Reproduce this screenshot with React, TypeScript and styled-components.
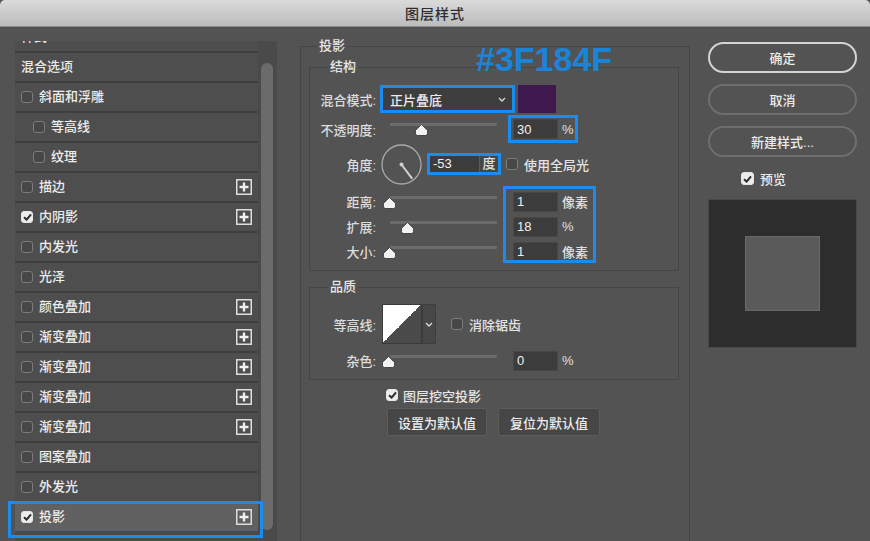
import React from 'react';
import styled, { createGlobalStyle, css } from 'styled-components';

const BLUE = '#1a8cf0';

const GlobalStyle = createGlobalStyle`
  html, body { margin: 0; padding: 0; background: #535353; }
  body {
    font-family: "Liberation Sans", "Noto Sans CJK SC", sans-serif;
    font-size: 13px;
    font-weight: 500;
    color: #e4e4e4;
  }
  * { box-sizing: border-box; }
`;

// blue annotation frame drawn over an element
const mark = css<{ $mark?: string }>`
  ${p =>
    p.$mark &&
    css`
      position: relative;
      &::after {
        content: '';
        position: absolute;
        inset: ${p.$mark};
        border: 3px solid ${BLUE};
        pointer-events: none;
      }
    `}
`;

const Window = styled.div`
  width: 870px;
  height: 541px;
  overflow: hidden;
  display: flex;
  flex-direction: column;
  background: #535353;
`;

const TitleBar = styled.div`
  flex: none;
  height: 27px;
  display: flex;
  align-items: center;
  justify-content: center;
  background: linear-gradient(#dadada, #bcbcbc);
  border-bottom: 1px solid #8a8a8a;
  border-radius: 5px 5px 0 0;
  font-size: 14px;
  letter-spacing: 1px;
  color: #2e2e2e;
`;

const Body = styled.div`
  flex: 1;
  min-height: 0;
  display: flex;
  align-items: flex-start;
  padding-left: 15px;
`;

/* ---------- left list ---------- */

const LeftPanel = styled.div`
  flex: none;
  margin-top: 14px;
  width: 262px;
  height: 520px;
  display: flex;
  background: #4a4a4a;
`;

const StyleList = styled.div`
  width: 243px;
  display: flex;
  flex-direction: column;
  gap: 2px;
  background: #3f3f3f;
  align-self: flex-start;
`;

const PeekRow = styled.div`
  flex: none;
  height: 10px;
  overflow: hidden;
  display: flex;
  align-items: flex-end;
  padding-left: 6px;
  background: #4e4e4e;
`;

const Row = styled.div<{ $indent?: boolean; $selected?: boolean; $mark?: string }>`
  flex: none;
  height: 28px;
  display: flex;
  align-items: center;
  gap: 6px;
  padding: 0 6px 0 ${p => (p.$indent ? 18 : 6)}px;
  background: ${p => (p.$selected ? '#616161' : '#4e4e4e')};
  ${mark}
`;

const RowLabel = styled.span`
  flex: 1;
  line-height: 28px;
  white-space: nowrap;
  color: #ececec;
`;

const ScrollArea = styled.div`
  flex: 1;
  padding: 22px 4px 0 3px;
`;

const ScrollThumb = styled.div`
  width: 12px;
  height: 467px;
  border-radius: 6px;
  background: #6b6b6b;
`;

/* ---------- shared controls ---------- */

const Box = styled.span<{ $checked?: boolean; $size: number }>`
  flex: none;
  width: ${p => p.$size}px;
  height: ${p => p.$size}px;
  border-radius: 3px;
  display: inline-flex;
  align-items: center;
  justify-content: center;
  border: 1px solid ${p => (p.$checked ? '#e6e6e6' : '#7c7c7c')};
  background: ${p => (p.$checked ? '#ececec' : '#474747')};
`;

function CheckBox({ checked, size = 12 }: { checked?: boolean; size?: number }) {
  return (
    <Box $checked={checked} $size={size}>
      {checked && (
        <svg width="9" height="8" viewBox="0 0 9 8">
          <path d="M1 4.2 L3.6 6.6 L8 1.3" stroke="#2e2e2e" strokeWidth="2" fill="none" />
        </svg>
      )}
    </Box>
  );
}

const PlusIcon = () => (
  <svg width="16" height="16" viewBox="0 0 16 16" style={{ flex: 'none' }}>
    <rect x="0.75" y="0.75" width="14.5" height="14.5" fill="none" stroke="#dedede" strokeWidth="1.5" />
    <path d="M8 3.5 V12.5 M3.5 8 H12.5" stroke="#f0f0f0" strokeWidth="2.4" />
  </svg>
);

/* ---------- middle ---------- */

const Middle = styled.div`
  position: relative;
  flex: none;
  margin: 11px 0 0 23px;
  width: 390px;
`;

const HexNote = styled.div`
  position: absolute;
  left: 176px;
  top: 4px;
  font-family: "Liberation Sans", sans-serif;
  font-weight: bold;
  font-size: 34px;
  line-height: 34px;
  color: #1b84d8;
`;

const Group = styled.fieldset<{ $pad: string }>`
  margin: 0;
  min-width: 0;
  border: 1px solid #454545;
  padding: ${p => p.$pad};
`;

const OuterGroup = styled(Group)`
  height: 560px;
`;

const SubGroup = styled(Group)<{ $top: number }>`
  width: 370px;
  margin-top: ${p => p.$top}px;
`;

const Legend = styled.legend<{ $x: number }>`
  margin-left: ${p => p.$x}px;
  padding: 0 2px;
  line-height: 16px;
  font-size: 13px;
  color: #e6e6e6;
`;

const Label = styled.span`
  flex: none;
  width: 66px;
  text-align: right;
  white-space: nowrap;
  color: #dcdcdc;
`;

const FlexRow = styled.div<{ $h: number; $top?: number }>`
  display: flex;
  align-items: center;
  height: ${p => p.$h}px;
  margin-top: ${p => p.$top || 0}px;
`;

const Select = styled.div<{ $mark?: string }>`
  width: 131px;
  height: 24px;
  margin-left: 6px;
  display: flex;
  align-items: center;
  justify-content: space-between;
  padding: 0 6px 0 7px;
  background: #3e3e3e;
  border: 1px solid #333;
  color: #ececec;
  ${mark}
`;

const Swatch = styled.div<{ $color: string }>`
  width: 38px;
  height: 28px;
  margin-left: 5px;
  background: ${p => p.$color};
`;

const SliderGrid = styled.div<{ $rowH: number; $top?: number; $mark?: string }>`
  width: 286px;
  display: grid;
  grid-template-columns: 80px 123px 45px 38px;
  grid-auto-rows: ${p => p.$rowH}px;
  align-items: center;
  margin-top: ${p => p.$top || 0}px;
  ${mark}
`;

const GridLabel = styled.span`
  padding-right: 14px;
  text-align: right;
  white-space: nowrap;
  color: #dcdcdc;
`;

const SliderBox = styled.div`
  position: relative;
  width: 107px;
  height: 18px;
  padding-top: 3px;
`;

const Track = styled.div`
  height: 3px;
  border-radius: 1px;
  background: #6c6c6c;
`;

const Thumb = styled.svg`
  position: absolute;
  top: 4px;
`;

function Slider({ value }: { value: number }) {
  return (
    <SliderBox>
      <Track />
      <Thumb width="13" height="12" viewBox="0 0 13 12" style={{ left: -8.5 + value * 1.1 }}>
        <path d="M6.5 0.5 L12.5 6.3 V9.5 Q12.5 11.5 10.5 11.5 H2.5 Q0.5 11.5 0.5 9.5 V6.3 Z" fill="#f2f2f2" stroke="#2f2f2f" strokeWidth="0.8" />
      </Thumb>
    </SliderBox>
  );
}

const NumInput = styled.div`
  height: 20px;
  display: flex;
  align-items: center;
  padding-left: 3px;
  background: #3c3c3c;
  border: 1px solid #474747;
  color: #f0f0f0;
`;

const Unit = styled.span`
  padding-left: 4px;
  color: #e0e0e0;
  white-space: nowrap;
`;

const Dial = styled.svg`
  flex: none;
  margin-left: 5px;
`;

const AngleBox = styled.div<{ $mark?: string }>`
  flex: none;
  margin-left: 7px;
  width: 70px;
  height: 18px;
  display: flex;
  background: #3c3c3c;
  border: 1px solid #474747;
  ${mark}
`;

const AngleValue = styled.span`
  width: 50px;
  padding-left: 3px;
  line-height: 16px;
  color: #f0f0f0;
  border-right: 1px solid #5a5a5a;
`;

const AngleUnit = styled.span`
  flex: 1;
  text-align: center;
  line-height: 16px;
  background: #464646;
  color: #e0e0e0;
`;

const InlineCheck = styled.label<{ $left: number }>`
  display: flex;
  align-items: center;
  gap: 6px;
  margin-left: ${p => p.$left}px;
  white-space: nowrap;
  color: #e4e4e4;
`;

const Contour = styled.div`
  flex: none;
  margin-left: 6px;
  display: flex;
  height: 40px;
`;

const ContourCurve = styled.div`
  width: 40px;
  height: 40px;
  background: linear-gradient(to bottom right, #ffffff 50%, #4b4b4b 50%);
  border: 1px solid #3a3a3a;
`;

const ContourMenu = styled.div`
  width: 14px;
  display: flex;
  align-items: center;
  justify-content: center;
  background: #474747;
  border: 1px solid #3e3e3e;
`;

const Chevron = () => (
  <svg width="8" height="5" viewBox="0 0 8 5">
    <path d="M1 1 L4 4 L7 1" stroke="#dcdcdc" strokeWidth="1.3" fill="none" />
  </svg>
);

const KnockoutRow = styled.label`
  display: flex;
  align-items: center;
  gap: 5px;
  height: 12px;
  margin-top: 9px;
  padding-left: 77px;
  color: #e6e6e6;
`;

const DefaultsRow = styled.div`
  display: flex;
  gap: 11px;
  margin-top: 7px;
  padding-left: 78px;
`;

const FlatButton = styled.button<{ $w: number }>`
  width: ${p => p.$w}px;
  height: 28px;
  padding: 0;
  font: inherit;
  color: #ececec;
  background: #464646;
  border: 1px solid #5c5c5c;
  border-radius: 2px;
`;

/* ---------- right ---------- */

const Right = styled.div`
  flex: none;
  margin: 15px 0 0 18px;
  width: 149px;
  display: flex;
  flex-direction: column;
`;

const Buttons = styled.div`
  display: flex;
  flex-direction: column;
  gap: 11px;
`;

const PillButton = styled.button<{ $primary?: boolean }>`
  height: 31px;
  padding: 0;
  font: inherit;
  color: #ececec;
  background: transparent;
  border: 2px solid ${p => (p.$primary ? '#d4d4d4' : '#6e6e6e')};
  border-radius: 16px;
`;

const PreviewCheck = styled.label`
  display: flex;
  align-items: center;
  gap: 6px;
  margin-top: 15px;
  padding-left: 33px;
  height: 13px;
  color: #ececec;
`;

const Preview = styled.div`
  margin-top: 14px;
  width: 149px;
  height: 149px;
  display: flex;
  align-items: center;
  justify-content: center;
  background: #2d2d2d;
  border: 1px solid #484848;
`;

const PreviewSquare = styled.div`
  width: 75px;
  height: 75px;
  background: #5a5a5a;
  border: 1px solid #696969;
`;

const styles: { name: string; check?: boolean; indent?: boolean; plus?: boolean; selected?: boolean }[] = [
  { name: '混合选项' },
  { name: '斜面和浮雕', check: false },
  { name: '等高线', check: false, indent: true },
  { name: '纹理', check: false, indent: true },
  { name: '描边', check: false, plus: true },
  { name: '内阴影', check: true, plus: true },
  { name: '内发光', check: false },
  { name: '光泽', check: false },
  { name: '颜色叠加', check: false, plus: true },
  { name: '渐变叠加', check: false, plus: true },
  { name: '渐变叠加', check: false, plus: true },
  { name: '渐变叠加', check: false, plus: true },
  { name: '渐变叠加', check: false, plus: true },
  { name: '图案叠加', check: false },
  { name: '外发光', check: false },
  { name: '投影', check: true, plus: true, selected: true },
];

const sizeRows = [
  { label: '距离:', value: 1, unit: '像素' },
  { label: '扩展:', value: 18, unit: '%' },
  { label: '大小:', value: 1, unit: '像素' },
];

const angle = (-53 * Math.PI) / 180;

export default function App() {
  return (
    <>
      <GlobalStyle />
      <Window>
        <TitleBar>图层样式</TitleBar>
        <Body>
          <LeftPanel>
            <StyleList>
              <PeekRow>
                <RowLabel>样式</RowLabel>
              </PeekRow>
              {styles.map((s, i) => (
                <Row key={i} $indent={s.indent} $selected={s.selected} $mark={s.selected ? '-2px -5px -7px -7px' : undefined}>
                  {s.check !== undefined && <CheckBox checked={s.check} />}
                  <RowLabel>{s.name}</RowLabel>
                  {s.plus && <PlusIcon />}
                </Row>
              ))}
            </StyleList>
            <ScrollArea>
              <ScrollThumb />
            </ScrollArea>
          </LeftPanel>

          <Middle>
            <OuterGroup $pad="0 10px 0 8px">
              <Legend $x={8}>投影</Legend>

              <SubGroup $top={5} $pad="10px 0 6px 0">
                <Legend $x={18}>结构</Legend>
                <FlexRow $h={28}>
                  <Label>混合模式:</Label>
                  <Select $mark="-3px">
                    <span>正片叠底</span>
                    <Chevron />
                  </Select>
                  <Swatch $color="#3F184F" />
                </FlexRow>

                <SliderGrid $rowH={26} $top={3} $mark="-1px 18px -1px 198px">
                  <GridLabel>不透明度:</GridLabel>
                  <Slider value={30} />
                  <NumInput>30</NumInput>
                  <Unit>%</Unit>
                </SliderGrid>

                <FlexRow $h={42} $top={1}>
                  <Label>角度:</Label>
                  <Dial width="41" height="41" viewBox="0 0 41 41">
                    <circle cx="20.5" cy="20.5" r="19.5" fill="none" stroke="#a8a8a8" strokeWidth="1.3" />
                    <line
                      x1="20.5"
                      y1="20.5"
                      x2={20.5 + 17 * Math.cos(angle)}
                      y2={20.5 - 17 * Math.sin(angle)}
                      stroke="#cfcfcf"
                      strokeWidth="2"
                      strokeLinecap="round"
                    />
                    <circle cx="20.5" cy="20.5" r="2" fill="#cfcfcf" />
                  </Dial>
                  <AngleBox $mark="-3px">
                    <AngleValue>-53</AngleValue>
                    <AngleUnit>度</AngleUnit>
                  </AngleBox>
                  <InlineCheck $left={7}>
                    <CheckBox />
                    使用全局光
                  </InlineCheck>
                </FlexRow>

                <SliderGrid $rowH={25} $top={4} $mark="-3px 0 1px 193px">
                  {sizeRows.map(r => (
                    <React.Fragment key={r.label}>
                      <GridLabel>{r.label}</GridLabel>
                      <Slider value={r.value} />
                      <NumInput>{r.value}</NumInput>
                      <Unit>{r.unit}</Unit>
                    </React.Fragment>
                  ))}
                </SliderGrid>
              </SubGroup>

              <SubGroup $top={8} $pad="9px 0 6px 0">
                <Legend $x={18}>品质</Legend>
                <FlexRow $h={40}>
                  <Label>等高线:</Label>
                  <Contour>
                    <ContourCurve />
                    <ContourMenu>
                      <Chevron />
                    </ContourMenu>
                  </Contour>
                  <InlineCheck $left={15}>
                    <CheckBox />
                    消除锯齿
                  </InlineCheck>
                </FlexRow>
                <SliderGrid $rowH={25} $top={4}>
                  <GridLabel>杂色:</GridLabel>
                  <Slider value={0} />
                  <NumInput>0</NumInput>
                  <Unit>%</Unit>
                </SliderGrid>
              </SubGroup>

              <KnockoutRow>
                <CheckBox checked />
                图层挖空投影
              </KnockoutRow>
              <DefaultsRow>
                <FlatButton $w={100}>设置为默认值</FlatButton>
                <FlatButton $w={102}>复位为默认值</FlatButton>
              </DefaultsRow>
            </OuterGroup>
            <HexNote>#3F184F</HexNote>
          </Middle>

          <Right>
            <Buttons>
              <PillButton $primary>确定</PillButton>
              <PillButton>取消</PillButton>
              <PillButton>新建样式...</PillButton>
            </Buttons>
            <PreviewCheck>
              <CheckBox checked size={13} />
              预览
            </PreviewCheck>
            <Preview>
              <PreviewSquare />
            </Preview>
          </Right>
        </Body>
      </Window>
    </>
  );
}
